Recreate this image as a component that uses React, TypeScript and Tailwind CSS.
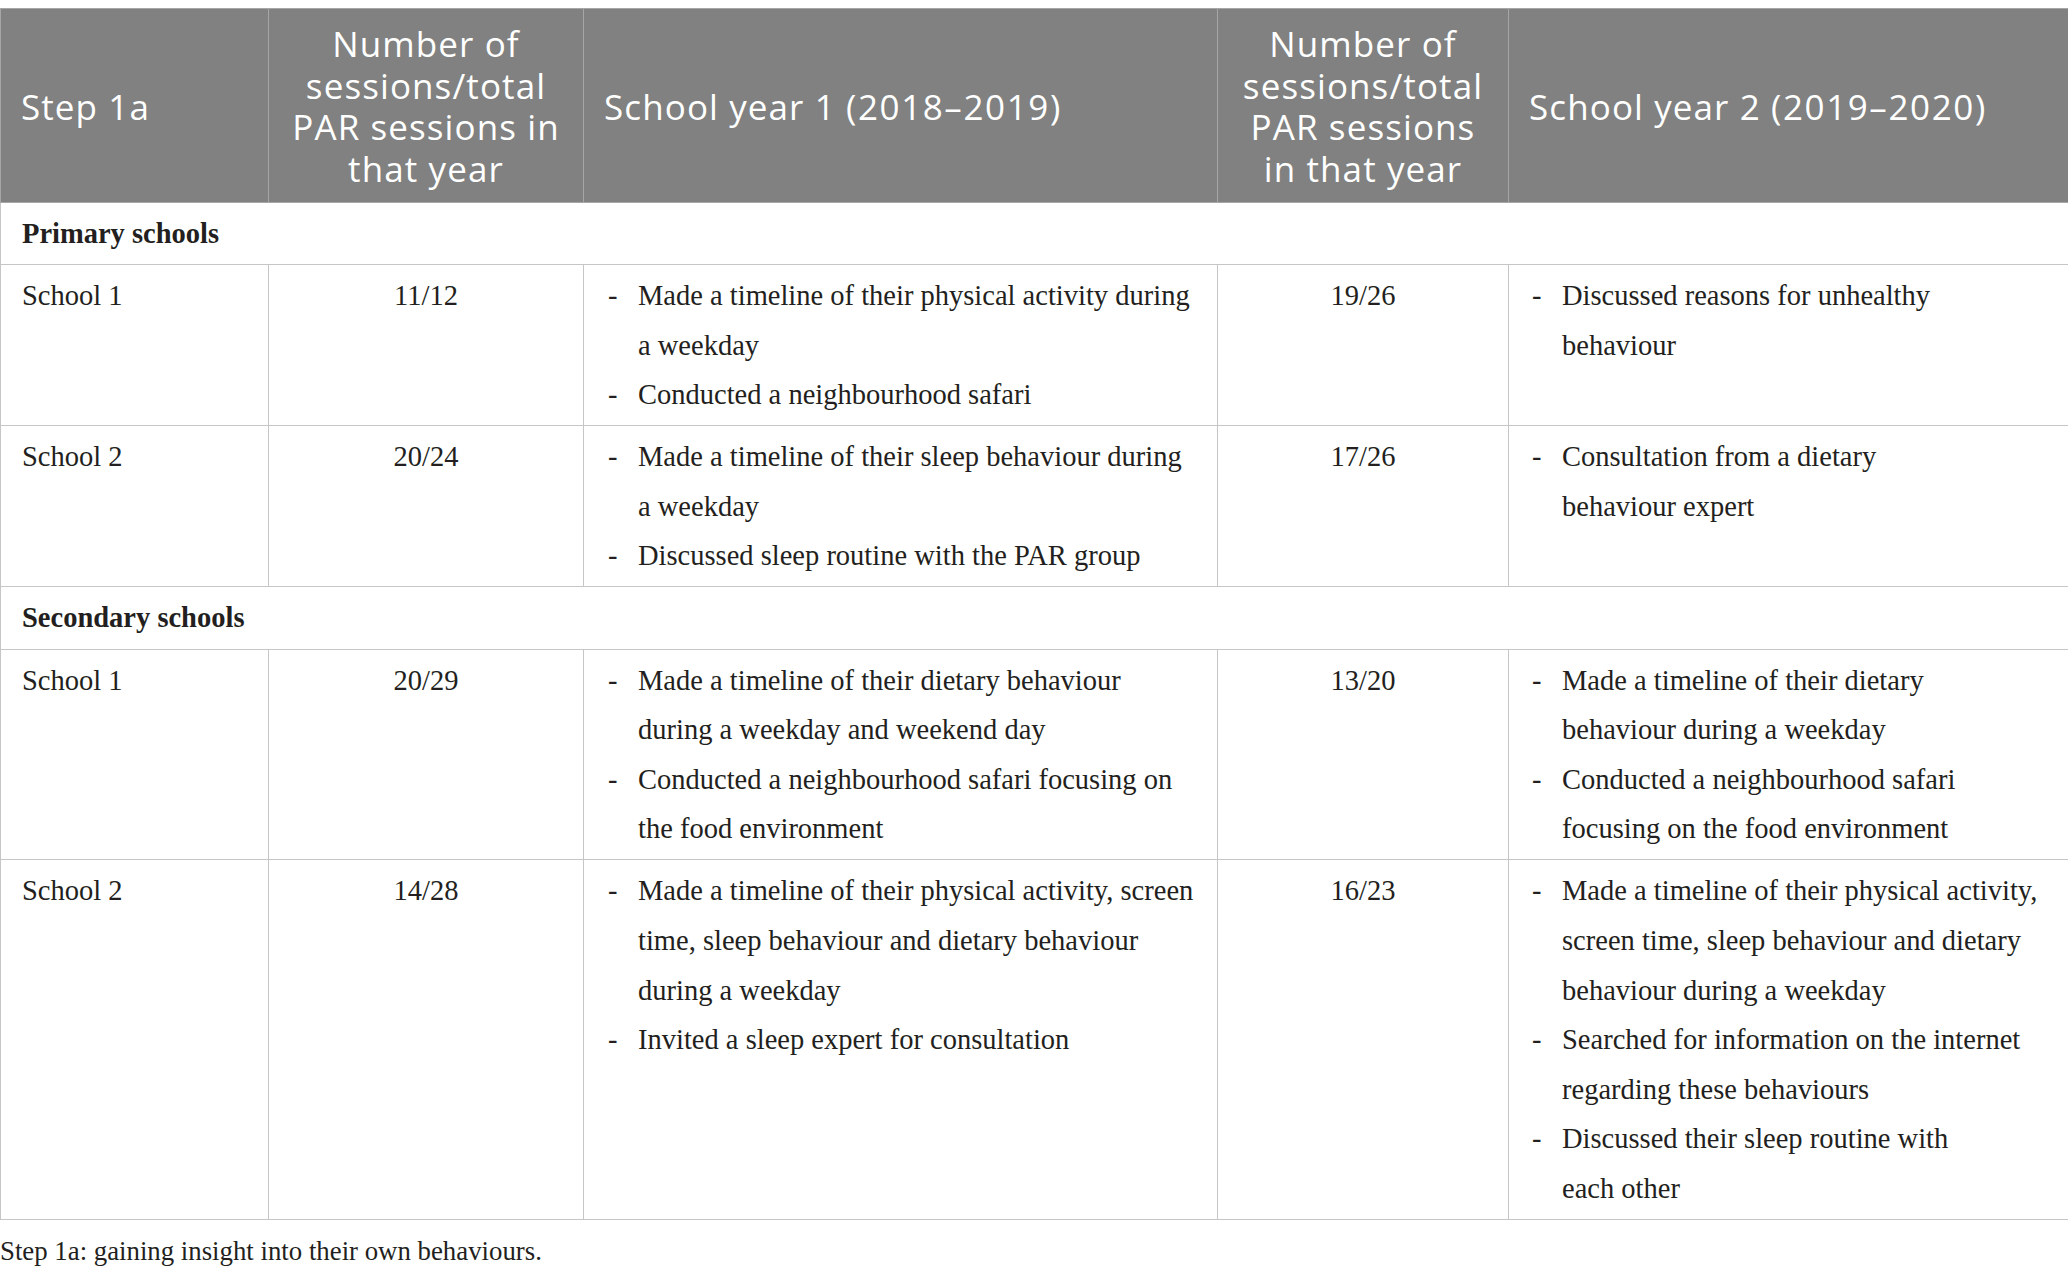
import React from "react";

type Row =
  | { kind: "section"; label: string }
  | {
      kind: "school";
      name: string;
      count1: string;
      year1: string[][];
      count2: string;
      year2: string[][];
    };

const rows: Row[] = [
  { kind: "section", label: "Primary schools" },
  {
    kind: "school",
    name: "School 1",
    count1: "11/12",
    year1: [
      ["Made a timeline of their physical activity during", "a weekday"],
      ["Conducted a neighbourhood safari"],
    ],
    count2: "19/26",
    year2: [["Discussed reasons for unhealthy", "behaviour"]],
  },
  {
    kind: "school",
    name: "School 2",
    count1: "20/24",
    year1: [
      ["Made a timeline of their sleep behaviour during", "a weekday"],
      ["Discussed sleep routine with the PAR group"],
    ],
    count2: "17/26",
    year2: [["Consultation from a dietary", "behaviour expert"]],
  },
  { kind: "section", label: "Secondary schools" },
  {
    kind: "school",
    name: "School 1",
    count1: "20/29",
    year1: [
      ["Made a timeline of their dietary behaviour", "during a weekday and weekend day"],
      ["Conducted a neighbourhood safari focusing on", "the food environment"],
    ],
    count2: "13/20",
    year2: [
      ["Made a timeline of their dietary", "behaviour during a weekday"],
      ["Conducted a neighbourhood safari", "focusing on the food environment"],
    ],
  },
  {
    kind: "school",
    name: "School 2",
    count1: "14/28",
    year1: [
      [
        "Made a timeline of their physical activity, screen",
        "time, sleep behaviour and dietary behaviour",
        "during a weekday",
      ],
      ["Invited a sleep expert for consultation"],
    ],
    count2: "16/23",
    year2: [
      [
        "Made a timeline of their physical activity,",
        "screen time, sleep behaviour and dietary",
        "behaviour during a weekday",
      ],
      ["Searched for information on the internet", "regarding these behaviours"],
      ["Discussed their sleep routine with", "each other"],
    ],
  },
];

function BulletList({ items }: { items: string[][] }) {
  return (
    <div>
      {items.map((lines, i) => (
        <div key={i} className="flex">
          <span className="w-[30px] shrink-0">-</span>
          <div>
            {lines.map((l) => (
              <div key={l} className="whitespace-nowrap">
                {l}
              </div>
            ))}
          </div>
        </div>
      ))}
    </div>
  );
}

function HeadLines({ lines }: { lines: string[] }) {
  return (
    <>
      {lines.map((l) => (
        <div key={l} className="whitespace-nowrap">
          {l}
        </div>
      ))}
    </>
  );
}

export default function App() {
  const th =
    "border border-[#a6a6a6] align-middle font-normal text-white pt-[14px] pb-[12px]";
  const td = "border border-[#c6c6c6] align-top pt-[6px] pb-[5.5px]";

  return (
    <div className="min-h-screen bg-white pt-[8px] font-['Liberation_Serif','Times_New_Roman',serif] text-[#231f20]">
      <table className="w-[2068px] table-fixed border-collapse border border-[#c6c6c6] text-[28.5px] leading-[49.6px]">
        <colgroup>
          <col className="w-[268px]" />
          <col className="w-[315px]" />
          <col className="w-[634px]" />
          <col className="w-[291px]" />
          <col className="w-[560px]" />
        </colgroup>
        <thead className="bg-[#808180] font-['Open_Sans','Noto_Sans',sans-serif] text-[35px] leading-[41.7px] tracking-[1.1px]">
          <tr>
            <th className={`${th} pl-[20px] text-left`}>Step 1a</th>
            <th className={`${th} text-center`}>
              <HeadLines lines={["Number of", "sessions/total", "PAR sessions in", "that year"]} />
            </th>
            <th className={`${th} pl-[20px] text-left`}>
              School year 1 <span className="tracking-[1.6px]">(2018–2019)</span>
            </th>
            <th className={`${th} text-center`}>
              <HeadLines lines={["Number of", "sessions/total", "PAR sessions", "in that year"]} />
            </th>
            <th className={`${th} pl-[20px] text-left`}>
              School year 2 <span className="tracking-[1.6px]">(2019–2020)</span>
            </th>
          </tr>
        </thead>
        <tbody>
          {rows.map((r, i) =>
            r.kind === "section" ? (
              <tr key={i}>
                <td colSpan={5} className={`${td} pl-[21px] font-bold`}>
                  {r.label}
                </td>
              </tr>
            ) : (
              <tr key={i}>
                <td className={`${td} pl-[21px]`}>{r.name}</td>
                <td className={`${td} text-center`}>{r.count1}</td>
                <td className={`${td} pl-[24px]`}>
                  <BulletList items={r.year1} />
                </td>
                <td className={`${td} text-center`}>{r.count2}</td>
                <td className={`${td} pl-[23px]`}>
                  <BulletList items={r.year2} />
                </td>
              </tr>
            )
          )}
        </tbody>
      </table>
      <p className="mt-[15px] text-[26.8px] leading-[32px]">
        Step 1a: gaining insight into their own behaviours.
      </p>
    </div>
  );
}
